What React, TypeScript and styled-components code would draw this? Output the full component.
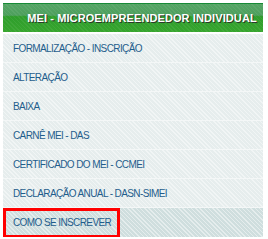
import React from "react";
import styled, { createGlobalStyle } from "styled-components";

const Global = createGlobalStyle`
  html, body { margin: 0; padding: 0; background: #ffffff; }
  body { padding: 3px 5px 0 3px; font-family: "Liberation Sans", Arial, sans-serif; }
`;

const Panel = styled.div`
  width: 260px;
  display: flex;
  flex-direction: column;
`;

const Header = styled.div`
  height: 29px;
  border-top: 1px solid #178a36;
  display: flex;
  align-items: center;
  justify-content: center;
  padding-left: 18px;
  box-sizing: border-box;
  background:
    repeating-linear-gradient(45deg, rgba(255,255,255,0.06) 0 1px, rgba(0,0,0,0) 1px 3px),
    linear-gradient(to bottom, #55a565 0%, #4e9f5e 40%, #2f9d2c 45%, #36a52e 100%);
  color: #ffffff;
  font-weight: bold;
  font-size: 11px;
  letter-spacing: 0.1px;
  text-shadow: 1px 1px 0 #2a3a2a;
  margin-bottom: 2px;
`;

const List = styled.ul`
  list-style: none;
  margin: 0;
  padding: 0;
  display: flex;
  flex-direction: column;
`;

const Item = styled.li<{ $active?: boolean }>`
  height: 29px;
  box-sizing: border-box;
  display: flex;
  align-items: center;
  background:
    repeating-linear-gradient(45deg, rgba(255,255,255,0.45) 0 1px, rgba(255,255,255,0) 1px 3px),
    ${(p) => (p.$active ? "#cfdede" : "#e6eded")};
  border-bottom: ${(p) => (p.$active ? "0" : "1px solid #f4f7f7")};
`;

const Link = styled.a<{ $active?: boolean }>`
  display: flex;
  align-items: center;
  height: ${(p) => (p.$active ? "30px" : "auto")};
  box-sizing: border-box;
  padding: ${(p) => (p.$active ? "0 6px 0 7px" : "0 0 0 10px")};
  border: ${(p) => (p.$active ? "3px solid #ff0000" : "0")};
  color: #1f5d8c;
  font-size: 10px;
  letter-spacing: -0.6px;
  text-decoration: none;
  white-space: nowrap;
`;

const items = [
  "FORMALIZAÇÃO - INSCRIÇÃO",
  "ALTERAÇÃO",
  "BAIXA",
  "CARNÊ MEI - DAS",
  "CERTIFICADO DO MEI - CCMEI",
  "DECLARAÇÃO ANUAL - DASN-SIMEI",
  "COMO SE INSCREVER",
];

export default function App() {
  return (
    <>
      <Global />
      <Panel>
        <Header>MEI - MICROEMPREENDEDOR INDIVIDUAL</Header>
        <List>
          {items.map((t, i) => {
            const active = i === items.length - 1;
            return (
              <Item key={t} $active={active}>
                <Link $active={active}>{t}</Link>
              </Item>
            );
          })}
        </List>
      </Panel>
    </>
  );
}
